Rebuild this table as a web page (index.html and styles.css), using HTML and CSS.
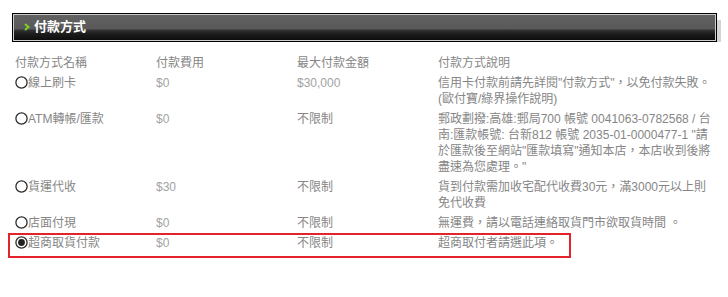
FILE: index.html
```html
<!DOCTYPE html>
<html lang="zh-Hant">
<head>
<meta charset="utf-8">
<title>付款方式</title>
<link rel="stylesheet" href="styles.css">
</head>
<body>
<div class="page">
  <div class="titlebar">
    <svg class="chev" width="6" height="8" viewBox="0 0 6 8"><polyline points="1,1 4.5,4 1,7" fill="none" stroke="#7ed321" stroke-width="2"/></svg>
    <span class="title">付款方式</span>
  </div>
  <div class="table">
    <div class="row head">
      <div class="cell">付款方式名稱</div>
      <div class="cell">付款費用</div>
      <div class="cell">最大付款金額</div>
      <div class="cell">付款方式說明</div>
    </div>
    <div class="row">
      <div class="cell name"><svg class="radio" width="13" height="13" viewBox="0 0 13 13"><circle cx="6.5" cy="6.5" r="5.6" fill="#fff" stroke="#2b2b2b" stroke-width="1.3"/></svg>線上刷卡</div>
      <div class="cell price">$0</div>
      <div class="cell price">$30,000</div>
      <div class="cell desc">信用卡付款前請先詳閱"付款方式"，以免付款失敗。<br>(歐付寶/綠界操作說明)</div>
    </div>
    <div class="row">
      <div class="cell name"><svg class="radio" width="13" height="13" viewBox="0 0 13 13"><circle cx="6.5" cy="6.5" r="5.6" fill="#fff" stroke="#2b2b2b" stroke-width="1.3"/></svg>ATM轉帳/匯款</div>
      <div class="cell price">$0</div>
      <div class="cell">不限制</div>
      <div class="cell desc">郵政劃撥:高雄:郵局700 帳號 0041063-0782568 / 台南:匯款帳號: 台新812 帳號 2035-01-0000477-1 "請於匯款後至網站"匯款填寫"通知本店，本店收到後將盡速為您處理。"</div>
    </div>
    <div class="row">
      <div class="cell name"><svg class="radio" width="13" height="13" viewBox="0 0 13 13"><circle cx="6.5" cy="6.5" r="5.6" fill="#fff" stroke="#2b2b2b" stroke-width="1.3"/></svg>貨運代收</div>
      <div class="cell price">$30</div>
      <div class="cell">不限制</div>
      <div class="cell desc">貨到付款需加收宅配代收費30元，滿3000元以上則免代收費</div>
    </div>
    <div class="row">
      <div class="cell name"><svg class="radio" width="13" height="13" viewBox="0 0 13 13"><circle cx="6.5" cy="6.5" r="5.6" fill="#fff" stroke="#2b2b2b" stroke-width="1.3"/></svg>店面付現</div>
      <div class="cell price">$0</div>
      <div class="cell">不限制</div>
      <div class="cell desc">無運費，請以電話連絡取貨門市欲取貨時間 。</div>
    </div>
    <div class="row selected">
      <div class="cell name"><svg class="radio" width="13" height="13" viewBox="0 0 13 13"><circle cx="6.5" cy="6.5" r="5.6" fill="#fff" stroke="#2b2b2b" stroke-width="1.3"/><circle cx="6.5" cy="6.5" r="3.4" fill="#222"/></svg>超商取貨付款</div>
      <div class="cell price">$0</div>
      <div class="cell">不限制</div>
      <div class="cell desc">超商取付者請選此項。</div>
    </div>
  </div>
</div>
</body>
</html>
```

FILE: styles.css
```css
html, body {
  margin: 0;
  padding: 0;
  background: #fff;
}

.page {
  padding: 13px 0 0 12px;
  font-family: "Liberation Sans", "Noto Sans CJK TC", sans-serif;
  font-size: 12px;
  color: #868686;
}

.titlebar {
  position: relative;
  box-sizing: border-box;
  width: 705px;
  height: 29px;
  border: 1px solid #000;
  box-shadow: inset 0 0 0 1px #cdcdcd;
  background: linear-gradient(to bottom, #626262 0, #595959 15px, #333 16px, #1c1c1c 20px, #0b0b0b 100%);
  display: flex;
  align-items: flex-start;
  padding: 4px 0 0 11px;
}

.titlebar::after {
  content: "";
  position: absolute;
  right: -5px;
  top: 6px;
  bottom: -1px;
  width: 4px;
  background: #d4d4d4;
}

.chev {
  margin-top: 5px;
  margin-right: 4px;
}

.title {
  color: #fff;
  font-family: "Noto Sans CJK TC", sans-serif;
  font-weight: bold;
  font-size: 13px;
  line-height: 16px;
}

.table {
  margin-top: 11px;
  padding-left: 1px;
}

.row {
  display: grid;
  grid-template-columns: 141px 141px 141px 281px;
  padding: 2px 0;
  line-height: 16px;
}

.cell {
  padding: 0 2px;
}

.name {
  display: flex;
  align-items: flex-start;
}

.radio {
  flex: none;
  margin-top: 1px;
  margin-right: 0;
}

.price {
  color: #a2a2a2;
}

.desc {
  color: #868686;
}

.row.selected {
  width: 563px;
  box-sizing: border-box;
  margin-left: -5px;
  margin-top: 0;
  padding: 0 0 5px 3px;
  border: 2px solid #e3222a;
  grid-template-columns: 141px 141px 141px 133px;
}
```
